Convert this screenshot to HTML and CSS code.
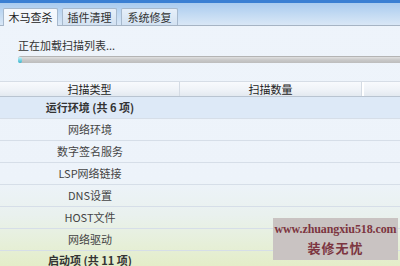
FILE: index.html
```html
<!DOCTYPE html>
<html>
<head>
    <title>木马查杀</title>
    <meta http-equiv="Content-Type" content="text/html;charset=utf-8"/>
    <link rel="stylesheet" href="styles.css">
</head>
<body>
<div class="wnd">
    <div class="topbar"></div>
    <div class="tabs">
        <div class="tab tab_on">木马查杀</div>
        <div class="tab">插件清理</div>
        <div class="tab tab_wide">系统修复</div>
    </div>
    <div class="panel">
        <div class="status">正在加载扫描列表...</div>
        <div class="progress"><span class="progress_dot"></span></div>

        <div class="grid">
            <div class="row head">
                <div class="cell">扫描类型</div>
                <div class="cell">扫描数量</div>
                <div class="cell"></div>
            </div>
            <div class="row group">
                <div class="cell">运行环境 (共 6 项)</div>
                <div class="cell"></div>
                <div class="cell"></div>
            </div>
            <div class="row"><div class="cell">网络环境</div><div class="cell"></div><div class="cell"></div></div>
            <div class="row"><div class="cell">数字签名服务</div><div class="cell"></div><div class="cell"></div></div>
            <div class="row"><div class="cell">LSP网络链接</div><div class="cell"></div><div class="cell"></div></div>
            <div class="row"><div class="cell">DNS设置</div><div class="cell"></div><div class="cell"></div></div>
            <div class="row"><div class="cell">HOST文件</div><div class="cell"></div><div class="cell"></div></div>
            <div class="row"><div class="cell">网络驱动</div><div class="cell"></div><div class="cell"></div></div>
            <div class="row group2">
                <div class="cell">启动项 (共 11 项)</div>
                <div class="cell"></div>
                <div class="cell"></div>
            </div>
        </div>
    </div>
    <div class="mark">
        <div class="mark_url">www.zhuangxiu518.com</div>
        <div class="mark_name">装修无忧</div>
    </div>
</div>
</body>
</html>
```

FILE: styles.css
```css
*{margin:0;padding:0;box-sizing:border-box;}
body{
    width:400px;
    height:266px;
    overflow:hidden;
    font-family:"Noto Sans CJK SC","Liberation Sans",sans-serif;
    font-size:11px;
    color:#333333;
}
.wnd{
    position:relative;
    width:400px;
    height:266px;
    overflow:hidden;
    background:linear-gradient(to bottom,#eef4fb 0,#edf3fa 180px,#e9f1ee 215px,#e6efd8 245px,#e4edc8 266px);
}
.topbar{
    height:3px;
    background:#3a7fd3;
}
.tabs{
    display:flex;
    align-items:flex-end;
    height:23px;
    padding-left:3px;
    background:linear-gradient(to bottom,#a9cbef 0,#c4dbf3 12px,#d9e7f6 22px);
    border-bottom:1px solid #a6b4c4;
}
.tab{
    width:55px;
    height:17px;
    margin-right:4px;
    line-height:16px;
    text-align:center;
    color:#333333;
    border:1px solid #a7b9cd;
    border-bottom:none;
    border-radius:2px 2px 0 0;
    background:linear-gradient(to bottom,#e6eff9,#d3e2f2);
}
.tab_wide{
    width:57px;
}
.tab_on{
    height:18px;
    margin-bottom:-1px;
    color:#222222;
    background:linear-gradient(to bottom,#f6f9fd,#eef4fb);
}
.panel{
    padding-top:11px;
}
.status{
    padding-left:18px;
    height:16px;
    line-height:16px;
    color:#333333;
}
.progress{
    position:relative;
    height:7px;
    margin:3px 0 0 18px;
    border-radius:3px 0 0 3px;
    background:linear-gradient(to bottom,#e0e0e0,#c8c8c8 50%,#bdbdbd);
    border-top:1px solid #b4b4b4;
}
.progress_dot{
    position:absolute;
    left:0;
    top:0;
    width:4px;
    height:6px;
    border-radius:2px;
    background:linear-gradient(to bottom,#c5f4fa,#34b5cf);
}
.grid{
    margin-top:18px;
}
.row{
    display:grid;
    grid-template-columns:180px 182px 38px;
    height:22px;
    border-bottom:1px solid #d6dee8;
}
.cell{
    line-height:21px;
    text-align:center;
    color:#444444;
}
.head{
    height:16px;
    border-top:1px solid #d6dde6;
    border-bottom:1px solid #b9c4d1;
    background:linear-gradient(to bottom,#f8fafd,#eef2f7 60%,#e3e9f0);
}
.head .cell{
    line-height:14px;
    color:#222222;
    border-right:1px solid #d4dbe4;
}
.head .cell:last-child{
    border-right:none;
    border-left:2px solid #ffffff;
}
.group{
    background:#dde9f7;
}
.group .cell,
.group2 .cell{
    font-weight:bold;
    color:#333333;
}
.group2 .cell{
    line-height:18px;
}
.mark{
    position:absolute;
    left:273px;
    top:218px;
    width:125px;
    height:42px;
    padding-top:3px;
    background:#c9c3c2;
    text-align:center;
    color:#7c3540;
}
.mark_url{
    font-family:"Liberation Serif",serif;
    font-size:12px;
    font-weight:bold;
    line-height:17px;
    letter-spacing:-0.1px;
}
.mark_name{
    font-family:"Noto Sans CJK SC",serif;
    font-size:13px;
    font-weight:bold;
    line-height:19px;
    letter-spacing:1px;
}
```
